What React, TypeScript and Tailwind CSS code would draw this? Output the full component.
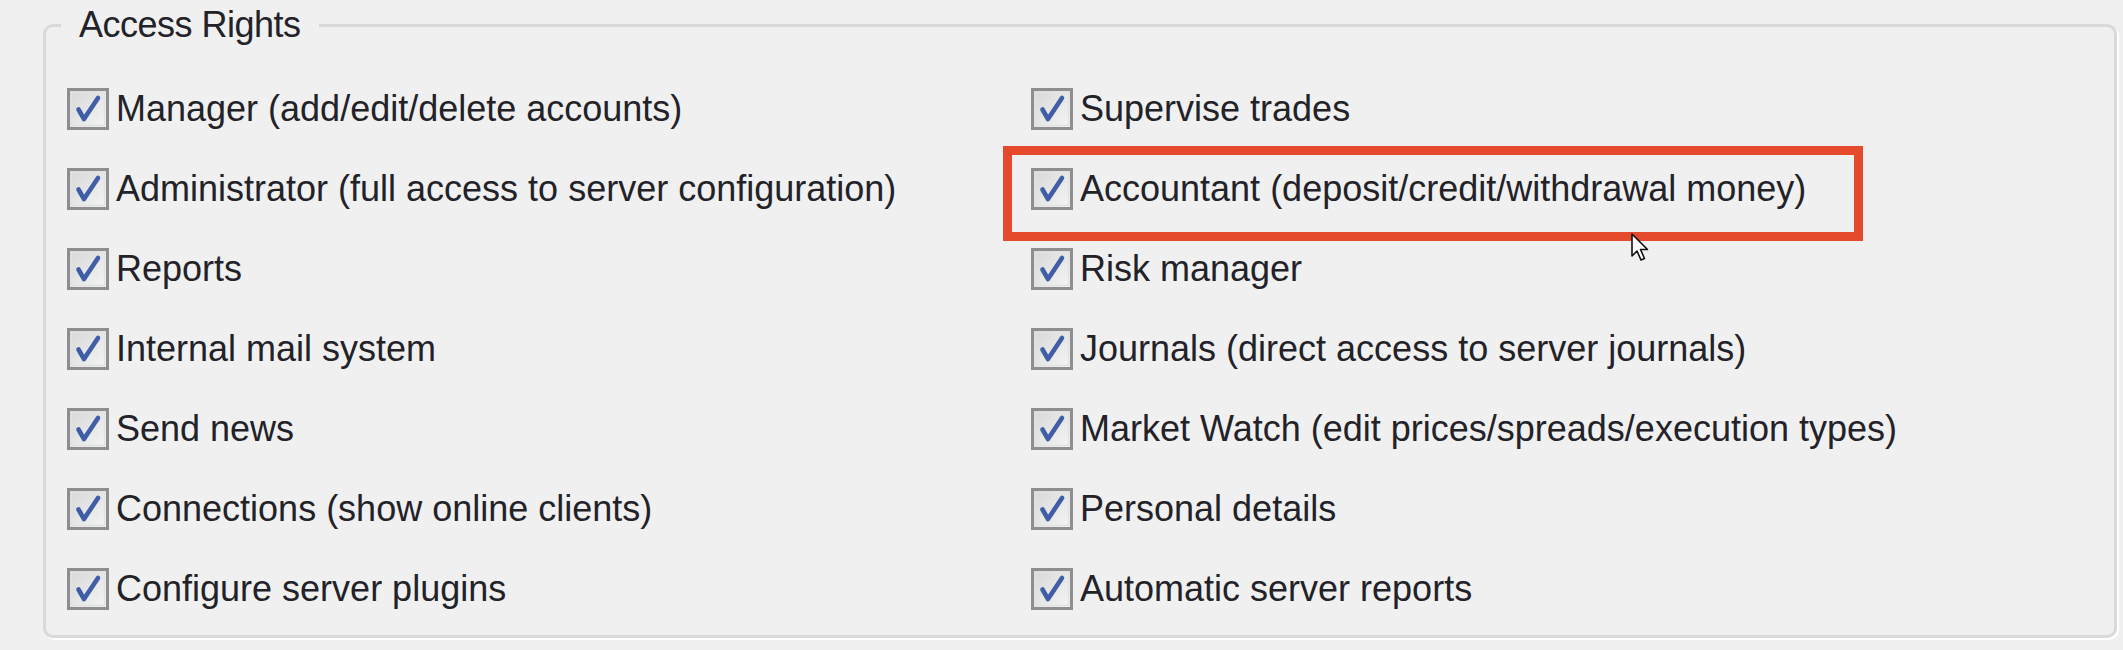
import React from 'react';

const left = [
  'Manager (add/edit/delete accounts)',
  'Administrator (full access to server configuration)',
  'Reports',
  'Internal mail system',
  'Send news',
  'Connections (show online clients)',
  'Configure server plugins',
];

const right = [
  'Supervise trades',
  'Accountant (deposit/credit/withdrawal money)',
  'Risk manager',
  'Journals (direct access to server journals)',
  'Market Watch (edit prices/spreads/execution types)',
  'Personal details',
  'Automatic server reports',
];

function CheckBox() {
  return (
    <svg width="42" height="42" viewBox="0 0 42 42" className="shrink-0">
      <defs>
        <linearGradient id="cbfill" x1="0" y1="0" x2="1" y2="1">
          <stop offset="0" stopColor="#d6d6d6" />
          <stop offset="1" stopColor="#f6f6f6" />
        </linearGradient>
      </defs>
      <rect x="1.5" y="1.5" width="39" height="39" fill="url(#cbfill)" stroke="#8e8e8e" strokeWidth="3" />
      <rect x="4.5" y="4.5" width="33" height="33" fill="none" stroke="#e2e2e2" strokeWidth="1.5" />
      <path d="M11.5 21.5 L17 31 L31 10" fill="none" stroke="#3f5ea6" strokeWidth="4.6" strokeLinecap="round" strokeLinejoin="round" />
    </svg>
  );
}

function Item({ label, highlight }: { label: string; highlight?: boolean }) {
  return (
    <div className="relative flex h-[80px] items-center gap-[7px]">
      <CheckBox />
      <span className="whitespace-nowrap text-[36px] leading-none text-[#222228]">{label}</span>
      {highlight && (
        <>
          <div className="pointer-events-none absolute left-[-28px] top-[-3px] h-[95px] w-[860px] border-[9px] border-[#e64a2d]" />
          <svg className="absolute left-[600px] top-[84px]" width="20" height="30" viewBox="0 0 20 30">
            <path d="M1 1 L1 23 L6 18 L10 27 L13.5 25.5 L9.5 16.5 L16.5 16.5 Z" fill="#fff" stroke="#111" strokeWidth="1.6" strokeLinejoin="round" />
          </svg>
        </>
      )}
    </div>
  );
}

export default function App() {
  return (
    <div
      className="h-[650px] w-[2123px] overflow-hidden bg-[#f0f0f0] pl-[43px] pt-[7px]"
      style={{ fontFamily: '"Liberation Sans", Arial, sans-serif' }}
    >
      <fieldset className="h-[631px] w-[2074px] rounded-[10px] border-[3px] border-[#d9d9d9] p-0 shadow-[2px_2px_0_#ffffff]">
        <legend className="ml-[15px] px-[18px] text-[36px] leading-[36px] tracking-[-0.5px] text-[#222228]">Access Rights</legend>
        <div className="grid grid-cols-[964px_1fr] pl-[21px] pt-[26px]">
          <div className="flex flex-col">
            {left.map((l) => (
              <Item key={l} label={l} />
            ))}
          </div>
          <div className="flex flex-col">
            {right.map((r, i) => (
              <Item key={r} label={r} highlight={i === 1} />
            ))}
          </div>
        </div>
      </fieldset>
    </div>
  );
}
